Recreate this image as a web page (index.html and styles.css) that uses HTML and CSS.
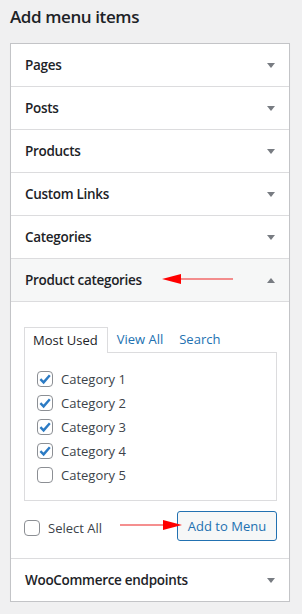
FILE: index.html
```html
<!DOCTYPE html>
<html lang="en">
<head>
    <meta charset="UTF-8">
    <title>Add menu items</title>
    <link rel="stylesheet" href="styles.css">
</head>
<body>
<h2 class="title">Add menu items</h2>

<div class="accordion">
    <div class="section"><span class="section-title">Pages</span><span class="caret"></span></div>
    <div class="section"><span class="section-title">Posts</span><span class="caret"></span></div>
    <div class="section"><span class="section-title">Products</span><span class="caret"></span></div>
    <div class="section"><span class="section-title">Custom Links</span><span class="caret"></span></div>
    <div class="section"><span class="section-title">Categories</span><span class="caret"></span></div>
    <div class="section open">
        <span class="section-title">Product categories</span>
        <svg class="note note-left" width="74" height="12" viewBox="0 0 74 12">
            <line x1="18" y1="6" x2="72" y2="6" stroke="#f26a6a" stroke-width="1.6"/>
            <polygon points="1,6 20,1 20,11" fill="#ff0000"/>
        </svg>
        <span class="caret up"></span>
    </div>

    <div class="section-content">
        <ul class="tabs">
            <li class="tab active">Most Used</li>
            <li class="tab">View All</li>
            <li class="tab">Search</li>
        </ul>
        <div class="tabs-panel">
            <ul class="checklist">
                <li><span class="box checked"><svg width="16" height="16" viewBox="0 0 16 16"><path d="M3.4 8.2 L6.6 11.4 L12.8 4.3" fill="none" stroke="#2c7bc4" stroke-width="2.4"/></svg></span>Category 1</li>
                <li><span class="box checked"><svg width="16" height="16" viewBox="0 0 16 16"><path d="M3.4 8.2 L6.6 11.4 L12.8 4.3" fill="none" stroke="#2c7bc4" stroke-width="2.4"/></svg></span>Category 2</li>
                <li><span class="box checked"><svg width="16" height="16" viewBox="0 0 16 16"><path d="M3.4 8.2 L6.6 11.4 L12.8 4.3" fill="none" stroke="#2c7bc4" stroke-width="2.4"/></svg></span>Category 3</li>
                <li><span class="box checked"><svg width="16" height="16" viewBox="0 0 16 16"><path d="M3.4 8.2 L6.6 11.4 L12.8 4.3" fill="none" stroke="#2c7bc4" stroke-width="2.4"/></svg></span>Category 4</li>
                <li><span class="box"></span>Category 5</li>
            </ul>
        </div>
        <div class="actions">
            <label class="select-all"><span class="box"></span>Select All</label>
            <svg class="note note-right" width="64" height="12" viewBox="0 0 64 12">
                <line x1="1" y1="6" x2="46" y2="6" stroke="#f26a6a" stroke-width="1.6"/>
                <polygon points="63,6 44,1 44,11" fill="#ff0000"/>
            </svg>
            <button class="button">Add to Menu</button>
        </div>
    </div>

    <div class="section last"><span class="section-title">WooCommerce endpoints</span><span class="caret"></span></div>
</div>
</body>
</html>
```

FILE: styles.css
```css
body {
    margin: 0;
    padding: 0 12px 0 10px;
    background-color: #f0f0f1;
    font-family: "Open Sans", "Noto Sans", sans-serif;
    color: #1d2327;
}
.title { font-size: 17px; font-weight: 600; letter-spacing: -0.4px; line-height: 23px; margin: 5px 0 15px; }

.accordion {
    border: 1px solid #c3c4c7;
    background-color: #fff;
    box-shadow: 0 1px 1px rgba(0, 0, 0, .04);
}
.section {
    position: relative;
    display: flex;
    align-items: center;
    justify-content: space-between;
    height: 42px;
    padding: 0 14px 0 14px;
    border-bottom: 1px solid #dcdcde;
}
.section.last { border-bottom: none; }
.section.open { background-color: #f6f7f7; }
.section-title { font-size: 13.5px; font-weight: 600; letter-spacing: -0.3px; }
.caret {
    width: 0;
    height: 0;
    border-left: 4px solid transparent;
    border-right: 4px solid transparent;
    border-top: 5px solid #787c82;
}
.caret.up { border-top: none; border-bottom: 5px solid #787c82; }

.note { position: absolute; }
.note-left { left: 150px; top: 14px; }
.note-right { left: 95px; top: 8px; }

.section-content {
    height: 257px;
    box-sizing: border-box;
    padding: 25px 12px 18px 13px;
    border-bottom: 1px solid #dcdcde;
}
.tabs {
    display: flex;
    list-style: none;
    margin: 0;
    padding: 0;
    height: 25px;
}
.tab {
    font-size: 13px;
    line-height: 24px;
    color: #2271b1;
    margin-right: 16px;
}
.tab.active {
    position: relative;
    z-index: 1;
    color: #1d2327;
    background-color: #fff;
    border: 1px solid #dcdcde;
    border-bottom: none;
    height: 25px;
    padding: 0 9px 0 8px;
    margin-right: 9px;
}
.tabs-panel {
    border: 1px solid #dcdcde;
    height: 149px;
    box-sizing: border-box;
    padding: 14px 12px 13px 12px;
}
.checklist { list-style: none; margin: 0; padding: 0; }
.checklist li {
    display: flex;
    align-items: center;
    height: 24px;
    font-size: 13px;
    color: #3c434a;
}
.box {
    display: inline-block;
    width: 16px;
    height: 16px;
    box-sizing: border-box;
    border: 1px solid #8c8f94;
    border-radius: 4px;
    margin-right: 8px;
    background-color: #fff;
    position: relative;
}
.box svg { position: absolute; left: -1px; top: -1px; }

.actions {
    position: relative;
    display: flex;
    align-items: center;
    justify-content: space-between;
    margin-top: 10px;
    height: 30px;
}
.select-all {
    display: flex;
    align-items: center;
    font-size: 13px;
    color: #3c434a;
    padding-top: 3px;
}
.button {
    width: 100px;
    height: 30px;
    font-family: inherit;
    font-size: 13px;
    color: #2271b1;
    background-color: #f6f7f7;
    border: 1px solid #2271b1;
    border-radius: 3px;
    padding: 0;
}
```
